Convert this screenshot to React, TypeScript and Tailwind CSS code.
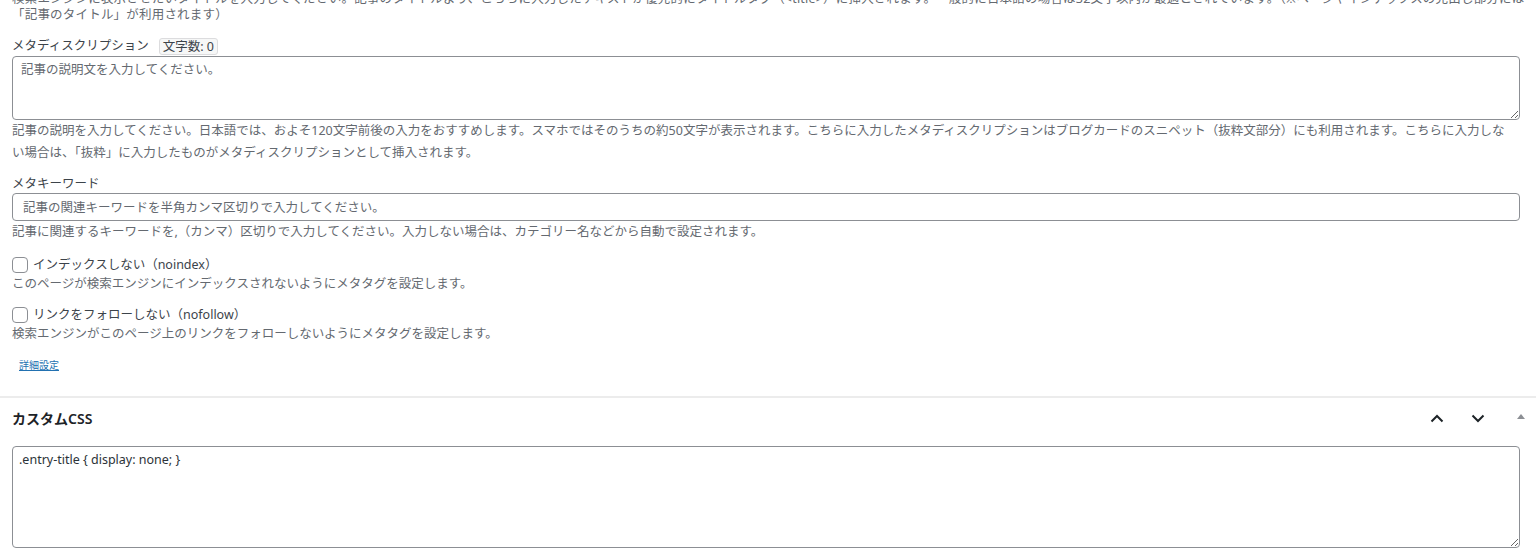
export default function App() {
  return (
    <div className="min-h-[558px] overflow-hidden bg-white font-['Noto_Sans','Noto_Sans_CJK_JP',sans-serif] text-[12.5px] text-[#3c434a]">
      <div className="pb-[24px] pl-[12px] pr-[16px]">
        <p className="mt-[-9px] whitespace-nowrap leading-[16px] tracking-[0.2px] text-[#646970]">
          検索エンジンに表示させたいタイトルを入力してください。記事のタイトルより、こちらに入力したテキストが優先的にタイトルタグ（&lt;title&gt;）に挿入されます。一般的に日本語の場合は32文字以内が最適とされています。（※ページやインデックスの見出し部分には
          <br />
          「記事のタイトル」が利用されます）
        </p>

        <div className="mt-[14px] flex h-[18px] items-center">
          <span>メタディスクリプション</span>
          <span className="ml-[10px] h-[17px] rounded-[3px] border border-[#dcdcde] bg-[#f6f7f7] px-[3px] leading-[15px]">
            文字数: 0
          </span>
        </div>
        <textarea
          className="mt-[1px] block h-[64px] w-full rounded-[4px] border border-[#8c8f94] px-[8px] pt-[3px] leading-[20px] text-[#2c3338] outline-none placeholder:text-[#646970]"
          placeholder="記事の説明文を入力してください。"
        />
        <p className="mr-[8px] leading-[22px] text-[#646970]">
          記事の説明を入力してください。日本語では、およそ120文字前後の入力をおすすめします。スマホではそのうちの約50文字が表示されます。こちらに入力したメタディスクリプションはブログカードのスニペット（抜粋文部分）にも利用されます。こちらに入力しない場合は、「抜粋」に入力したものがメタディスクリプションとして挿入されます。
        </p>

        <div className="mt-[11px] leading-[18px]">メタキーワード</div>
        <input
          className="block h-[28px] w-full rounded-[4px] border border-[#8c8f94] px-[10px] text-[#2c3338] outline-none placeholder:text-[#646970]"
          placeholder="記事の関連キーワードを半角カンマ区切りで入力してください。"
        />
        <p className="leading-[22px] text-[#646970]">
          記事に関連するキーワードを,（カンマ）区切りで入力してください。入力しない場合は、カテゴリー名などから自動で設定されます。
        </p>

        <label className="mt-[12px] flex h-[20px] items-center gap-[5px]">
          <input
            type="checkbox"
            className="m-0 h-[16px] w-[16px] appearance-none rounded-[4px] border border-[#8c8f94] bg-white"
          />
          <span>インデックスしない（noindex）</span>
        </label>
        <p className="leading-[18px] text-[#646970]">
          このページが検索エンジンにインデックスされないようにメタタグを設定します。
        </p>

        <label className="mt-[12px] flex h-[20px] items-center gap-[5px]">
          <input
            type="checkbox"
            className="m-0 h-[16px] w-[16px] appearance-none rounded-[4px] border border-[#8c8f94] bg-white"
          />
          <span>リンクをフォローしない（nofollow）</span>
        </label>
        <p className="leading-[18px] text-[#646970]">
          検索エンジンがこのページ上のリンクをフォローしないようにメタタグを設定します。
        </p>

        <a
          href="#"
          className="ml-[7px] mt-[15px] block w-fit text-[10px] leading-[14px] text-[#2271b1] underline"
        >
          詳細設定
        </a>
      </div>

      <div className="border-t-2 border-[#ececec] pb-[10px]">
        <div className="flex h-[40px] items-center justify-between pl-[12px] pr-[5px]">
          <h2 className="text-[14px] font-semibold text-[#1d2327]">カスタムCSS</h2>
          <div className="flex items-center">
            <button className="flex h-[36px] w-[36px] items-center justify-center">
              <svg width="14" height="9" viewBox="0 0 14 9">
                <polyline points="1.5,7.5 7,2 12.5,7.5" fill="none" stroke="#1d2327" strokeWidth="2" />
              </svg>
            </button>
            <button className="ml-[5px] flex h-[36px] w-[36px] items-center justify-center">
              <svg width="14" height="9" viewBox="0 0 14 9">
                <polyline points="1.5,1.5 7,7 12.5,1.5" fill="none" stroke="#1d2327" strokeWidth="2" />
              </svg>
            </button>
            <button className="ml-[15px] flex h-[36px] w-[20px] items-center justify-center pb-[4px]">
              <svg width="8" height="5" viewBox="0 0 8 5">
                <polygon points="0,5 4,0 8,5" fill="#8c8f94" />
              </svg>
            </button>
          </div>
        </div>
        <div className="pl-[12px] pr-[16px] pt-[8px]">
          <textarea
            className="block h-[102px] w-full rounded-[4px] border border-[#8c8f94] px-[6px] pt-[3px] leading-[20px] text-[#2c3338] outline-none"
            defaultValue=".entry-title { display: none; }"
          />
        </div>
      </div>
    </div>
  );
}
